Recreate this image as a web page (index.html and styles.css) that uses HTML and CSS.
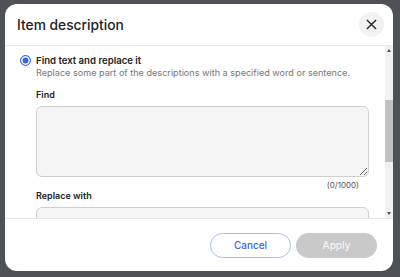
FILE: index.html
```html
<!DOCTYPE html>
<html lang="en">
<head>
    <meta charset="UTF-8" />
    <meta name="viewport" content="width=device-width, initial-scale=1.0" />
    <title>Item description</title>
    <link rel="stylesheet" href="styles.css">
</head>
<body>
    <div class="modal">
        <div class="modal-header">
            <h2 class="modal-title">Item description</h2>
            <button class="close-btn" aria-label="Close">
                <svg viewBox="0 0 12 12">
                    <path d="M1 1 L11 11 M11 1 L1 11" />
                </svg>
            </button>
        </div>

        <div class="modal-main">
            <div class="modal-body">
                <div class="option is-selected">
                    <label class="option-head"><input type="radio" name="mode" class="radio" checked /> Find text and replace it</label>
                    <p class="option-desc">Replace some part of the descriptions with a specified word or sentence.</p>

                    <div class="fields">
                        <label class="field-label" for="find">Find</label>
                        <textarea class="field-input" id="find" maxlength="1000"></textarea>
                        <div class="field-count">(0/1000)</div>

                        <label class="field-label" for="replace">Replace with</label>
                        <textarea class="field-input" id="replace" maxlength="1000"></textarea>
                    </div>
                </div>
            </div>

            <div class="scrollbar">
                <span class="scroll-btn up"></span>
                <div class="scroll-track"><div class="scroll-thumb"></div></div>
                <span class="scroll-btn down"></span>
            </div>
        </div>

        <div class="modal-footer">
            <button class="btn btn-outline">Cancel</button>
            <button class="btn btn-disabled" disabled>Apply</button>
        </div>
    </div>
</body>
</html>
```

FILE: styles.css
```css
* {
    box-sizing: border-box;
}
body {
    margin: 0;
    height: 277px;
    padding: 4px 7px 6px 5px;
    background: #4e5156;
    font-family: Inter, "Noto Sans", sans-serif;
    overflow: hidden;
}
.modal {
    height: 267px;
    background: #fff;
    border-radius: 12px;
    display: flex;
    flex-direction: column;
    overflow: hidden;
}

/* header */
.modal-header {
    flex: none;
    height: 42px;
    display: flex;
    align-items: center;
    justify-content: space-between;
    padding: 0 9px 0 12px;
    border-bottom: 1px solid #ececec;
}
.modal-title {
    margin: 0;
    font-size: 13.8px;
    font-weight: 500;
    color: #222;
}
.close-btn {
    width: 25px;
    height: 25px;
    padding: 0;
    border: none;
    border-radius: 50%;
    background: #f2f2f2;
    display: flex;
    align-items: center;
    justify-content: center;
    cursor: pointer;
}
.close-btn svg {
    width: 11px;
    height: 11px;
    stroke: #222;
    stroke-width: 1.5;
    fill: none;
}

/* body */
.modal-main {
    flex: 1;
    min-height: 0;
    display: flex;
}
.modal-body {
    flex: 1;
    overflow: hidden;
    padding: 8px 16px 0 15px;
}
.scrollbar {
    flex: none;
    width: 8px;
    display: flex;
    flex-direction: column;
    background: #f1f1f1;
}
.scroll-btn {
    flex: none;
    height: 9px;
    display: flex;
    align-items: center;
    justify-content: center;
}
.scroll-btn::before {
    content: "";
    border-left: 2.5px solid transparent;
    border-right: 2.5px solid transparent;
}
.scroll-btn.up::before {
    border-bottom: 3px solid #505050;
}
.scroll-btn.down::before {
    border-top: 3px solid #505050;
}
.scroll-track {
    flex: 1;
    padding-top: 45px;
}
.scroll-thumb {
    height: 62px;
    background: #c1c1c1;
}

.option-head {
    display: flex;
    align-items: center;
    gap: 5px;
    font-size: 9.6px;
    font-weight: 600;
    line-height: 13px;
    color: #222;
}
.radio {
    appearance: none;
    flex: none;
    width: 11px;
    height: 11px;
    margin: 0;
    border: 1.5px solid #8a8a8a;
    border-radius: 50%;
}
.radio:checked {
    border-color: #3b63e6;
    background: #3b63e6;
    box-shadow: inset 0 0 0 1.5px #fff;
}
.option-desc {
    margin: 0 0 0 16px;
    font-size: 9.1px;
    line-height: 12px;
    color: #777;
    white-space: nowrap;
}

.fields {
    margin-top: 10px;
    padding-left: 16px;
}
.field-label {
    display: block;
    margin-bottom: 6px;
    font-size: 9px;
    font-weight: 600;
    line-height: 11px;
    color: #222;
}
.field-input {
    display: block;
    width: 100%;
    height: 71px;
    border: 1px solid #cfcfcf;
    border-radius: 6px;
    background: #f5f5f5;
    resize: vertical;
    font: inherit;
}
.field-count {
    margin-top: 3px;
    padding-right: 10px;
    text-align: right;
    font-size: 8px;
    line-height: 10px;
    color: #555;
}

/* footer */
.modal-footer {
    flex: none;
    height: 53px;
    display: flex;
    align-items: center;
    justify-content: flex-end;
    gap: 5px;
    padding: 0 16px;
    border-top: 1px solid #e6e6e6;
}
.btn {
    width: 81px;
    height: 25px;
    border-radius: 13px;
    font-family: inherit;
    font-size: 10px;
    font-weight: 500;
    cursor: pointer;
}
.btn-outline {
    background: #fff;
    border: 1px solid #a9bcf5;
    color: #3d63dd;
}
.btn-disabled {
    background: #c9c9c9;
    border: none;
    color: #f5f5f5;
    cursor: default;
}
```
